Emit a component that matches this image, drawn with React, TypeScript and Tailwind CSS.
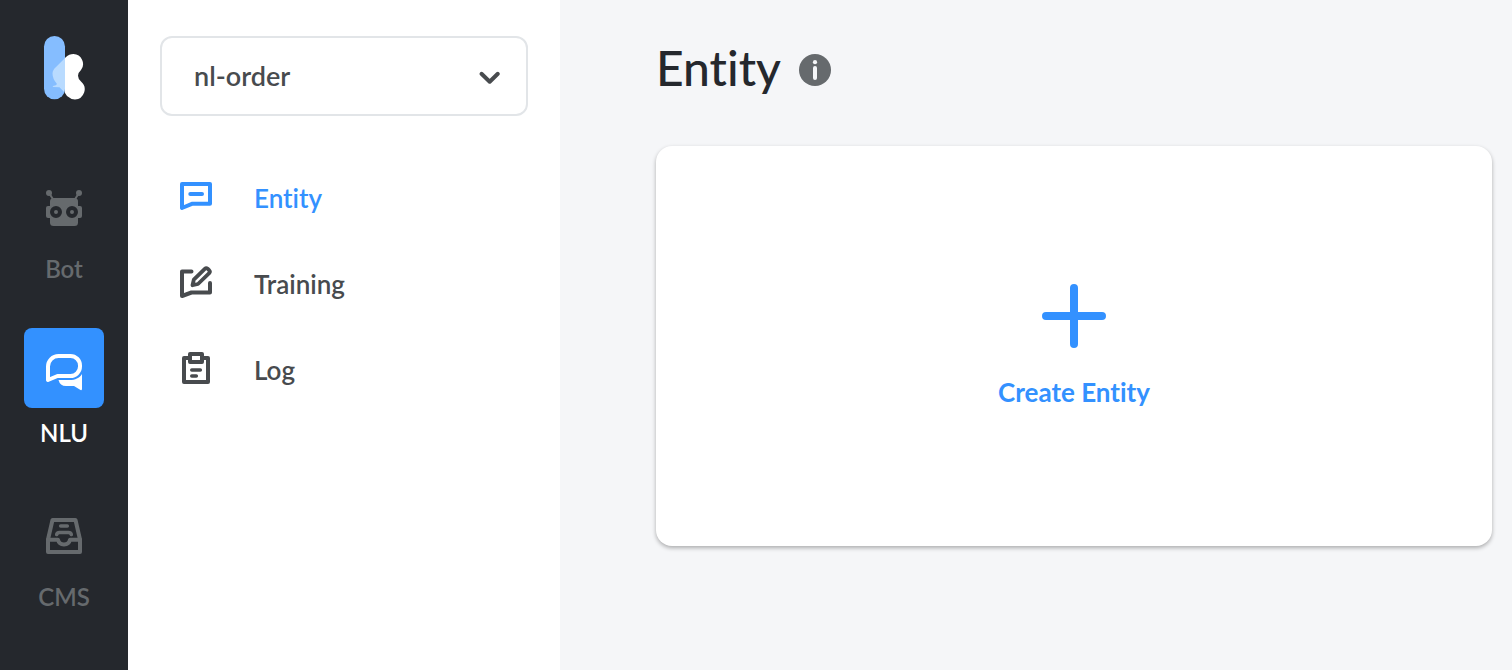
import React from "react";

function Logo() {
  const blob =
    "M66 57Q69 54 73.5 54A10 10 0 0 1 81 70Q75 75.500 81 81.500A10.200 10.200 0 0 1 75 99.500Q71 99.500 67 96L65 93L59.500 87.300L53.500 87Q52.200 86.600 53 86Q56.500 85.300 57 84Q52.500 79 52.500 73.500Q52.500 70 56 67Z";
  return (
    <svg viewBox="40 32 48 72" className="h-[72px] w-12" aria-hidden="true">
      <defs>
        <clipPath id="stem">
          <rect x="44" y="36" width="21" height="63.300" rx="10.500" />
        </clipPath>
        <clipPath id="arm">
          <rect x="65" y="36" width="23" height="68" />
        </clipPath>
      </defs>
      <rect x="44" y="36" width="21" height="63.300" rx="10.500" fill="#85bdff" />
      <path d={blob} fill="#fff" clipPath="url(#arm)" />
      <path d={blob} fill="#b9dbff" clipPath="url(#stem)" />
    </svg>
  );
}

function BotIcon() {
  return (
    <svg viewBox="0 0 80 80" className="size-20" aria-hidden="true">
      <g fill="#666a6d">
        <rect x="26" y="34" width="28" height="28" rx="3.500" />
        <rect x="22" y="42" width="36" height="12" rx="2" />
        <circle cx="25" cy="29" r="3" />
        <circle cx="55" cy="29" r="3" />
      </g>
      <path d="M25 29L29.500 36M55 29L50.500 36" stroke="#666a6d" strokeWidth="2" />
      <circle cx="32" cy="48" r="4" fill="#666a6d" stroke="#25282d" strokeWidth="4" />
      <circle cx="48" cy="48" r="4" fill="#666a6d" stroke="#25282d" strokeWidth="4" />
    </svg>
  );
}

function ChatIcon() {
  return (
    <svg viewBox="0 0 80 80" className="size-20" aria-hidden="true">
      <path
        d="M24 52V38.500A10.500 10.500 0 0 1 34.500 28H46.500A9.500 9.500 0 0 1 56 37.500V38.500A9.500 9.500 0 0 1 46.500 48H33.500Z"
        fill="none"
        stroke="#fff"
        strokeWidth="4"
        strokeLinejoin="round"
      />
      <path d="M34.500 52H46C51 52 55.500 50 58 46V61Q58 62.600 56.500 62L50 58H42Q36 58 34.500 52Z" fill="#fff" />
    </svg>
  );
}

function TrayIcon() {
  return (
    <svg
      viewBox="0 0 80 80"
      className="size-20"
      fill="none"
      stroke="#666a6d"
      strokeWidth="4"
      strokeLinecap="round"
      strokeLinejoin="round"
      aria-hidden="true"
    >
      <path d="M24 60V47.500L28.500 28H51.500L56 47.500V60Z" />
      <path d="M24 47.700H34Q35 52.500 40 52.500T46 47.700H56" />
      <path d="M36.700 34H43.300" strokeWidth="3.600" />
      <path d="M32.700 42.500Q33.300 40.500 35.500 40.500H44.500Q46.700 40.500 47.300 42.500" strokeWidth="3.600" />
    </svg>
  );
}

const line = {
  viewBox: "0 0 32 32",
  fill: "none",
  stroke: "currentColor",
  strokeWidth: 4,
  strokeLinecap: "round" as const,
  strokeLinejoin: "round" as const,
  "aria-hidden": true,
};

function EntityIcon() {
  return (
    <svg {...line} className="size-8 shrink-0">
      <path d="M2 28V4H30V23.700H12.500Z" />
      <path d="M10.300 14H22" />
    </svg>
  );
}

function TrainingIcon() {
  return (
    <svg {...line} className="size-8 shrink-0">
      <path d="M11.500 5.500H2V30L11.500 26.500H30V17" />
      <path d="M12.500 19.200L13.800 13.700L24.800 2.800Q26.200 1.500 27.600 2.700L29.300 4.400Q30.500 5.800 29.200 7.200L18 18Z" strokeWidth="3.800" />
    </svg>
  );
}

function LogIcon() {
  return (
    <svg {...line} className="size-8 shrink-0">
      <path d="M9 6H4V30H28V6H23" />
      <path d="M10 2H22V10H10Z" />
      <path d="M11.800 18H20.300M11.800 24H16.300" strokeWidth="3.600" />
    </svg>
  );
}

const products = [
  { label: "Bot", icon: <BotIcon />, active: false },
  { label: "NLU", icon: <ChatIcon />, active: true },
  { label: "CMS", icon: <TrayIcon />, active: false },
];

const sections = [
  { label: "Entity", icon: <EntityIcon />, active: true },
  { label: "Training", icon: <TrainingIcon />, active: false },
  { label: "Log", icon: <LogIcon />, active: false },
];

export default function App() {
  return (
    <div className="flex min-h-screen bg-[#f5f6f8] font-['Lato',sans-serif] font-semibold text-[#484b4e] [font-variant-ligatures:none]">
      <aside className="flex w-32 shrink-0 flex-col items-center bg-[#25282d] pt-8">
        <a href="#home" aria-label="Home">
          <Logo />
        </a>
        <nav aria-label="Products" className="mt-[60px] flex flex-col gap-[42px]">
          {products.map((p) => (
            <a
              key={p.label}
              href={`#${p.label.toLowerCase()}`}
              aria-current={p.active ? "page" : undefined}
              className={`flex flex-col items-center gap-2 text-2xl/[34px] ${p.active ? "text-white" : "text-[#666a6d]"}`}
            >
              <span className={`rounded-lg ${p.active ? "bg-[#3391ff]" : ""}`}>{p.icon}</span>
              {p.label}
            </a>
          ))}
        </nav>
      </aside>

      <section className="w-[432px] shrink-0 bg-white px-8 pt-9">
        <div className="relative">
          <select
            aria-label="Project"
            className="h-20 w-full appearance-none rounded-xl border-2 border-[#e2e5e8] bg-white pl-8 text-[27px]"
          >
            <option>nl-order</option>
          </select>
          <svg
            viewBox="0 0 24 24"
            className="pointer-events-none absolute top-7 right-[26px] size-6"
            fill="none"
            stroke="#484b4e"
            strokeWidth="4"
            strokeLinecap="round"
            strokeLinejoin="round"
            aria-hidden="true"
          >
            <path d="M3.500 9.800L11.700 17.700L19.800 9.800" />
          </svg>
        </div>
        <nav aria-label="NLU" className="mt-16 flex flex-col gap-[50px] px-5">
          {sections.map((s) => (
            <a
              key={s.label}
              href={`#${s.label.toLowerCase()}`}
              aria-current={s.active ? "page" : undefined}
              className={`flex items-start gap-[42px] text-[26px]/9 ${s.active ? "text-[#3391ff]" : ""}`}
            >
              {s.icon}
              {s.label}
            </a>
          ))}
        </nav>
      </section>

      <main className="min-w-0 flex-1 pt-9 pr-5 pl-24">
        <div className="flex items-center gap-[18px]">
          <h1 className="text-5xl/[64px] font-medium text-[#25282d]">Entity</h1>
          <button type="button" aria-label="About entities" className="pt-1">
            <svg viewBox="0 0 32 32" className="size-8" aria-hidden="true">
              <circle cx="16" cy="16" r="16" fill="#666a6d" />
              <circle cx="16" cy="8.200" r="2.100" fill="#f5f6f8" />
              <rect x="14" y="12" width="4" height="14" rx="2" fill="#f5f6f8" />
            </svg>
          </button>
        </div>
        <button
          type="button"
          className="mt-[46px] flex h-[400px] w-full flex-col items-center justify-center gap-7 rounded-2xl bg-white text-[26px]/8 font-bold text-[#3391ff] shadow-[0_2px_4px_rgba(0,0,0,0.3)]"
        >
          <svg
            viewBox="0 0 64 64"
            className="size-16"
            stroke="currentColor"
            strokeWidth="8"
            strokeLinecap="round"
            aria-hidden="true"
          >
            <path d="M32 4V60M4 32H60" />
          </svg>
          Create Entity
        </button>
      </main>
    </div>
  );
}
